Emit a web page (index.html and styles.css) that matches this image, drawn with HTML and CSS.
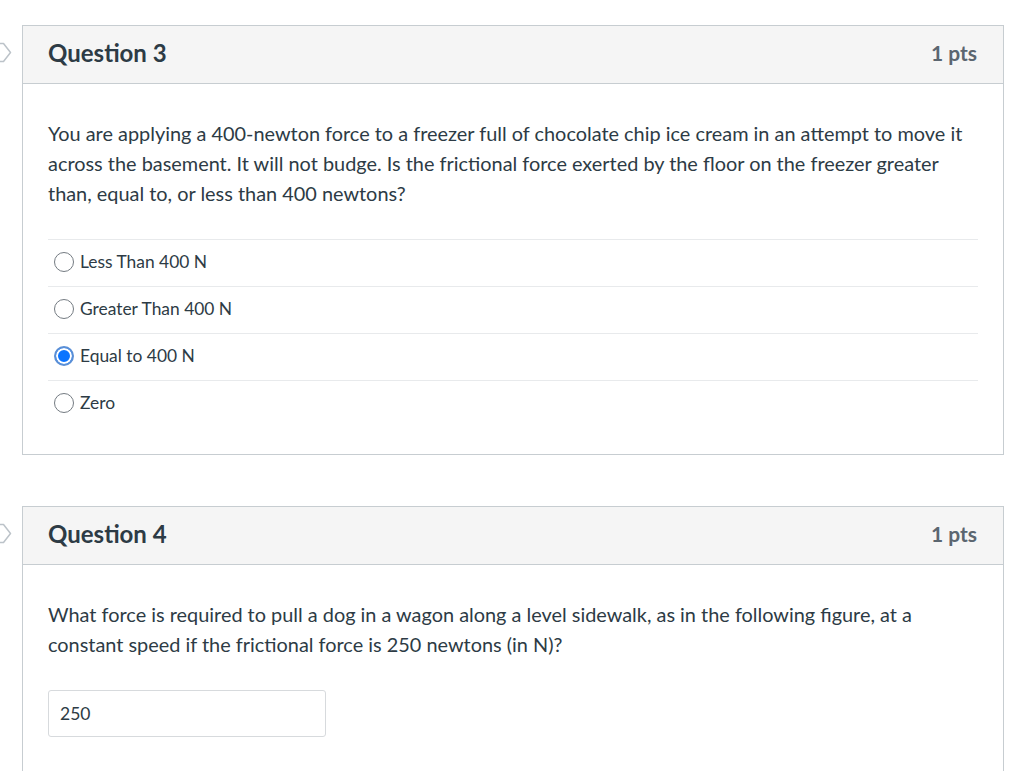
FILE: index.html
```html
<!DOCTYPE html>
<html>
<head>
<meta charset="utf-8">
<link rel="stylesheet" href="styles.css">
</head>
<body>
<div class="page">
  <div class="question">
    <svg class="flag" width="24" height="22" viewBox="0 0 24 22"><path d="M-2 1.5 L15.5 1.5 L22.5 10.5 L15.5 19.5 L-2 19.5" fill="none" stroke="#bcc3c9" stroke-width="1.5" stroke-linejoin="round"/></svg>
    <div class="card">
      <div class="card-header">
        <h2 class="title">Question 3</h2>
        <span class="pts">1 pts</span>
      </div>
      <div class="card-body">
        <p class="text">You are applying a 400-newton force to a freezer full of chocolate chip ice cream in an attempt to move it across the basement. It will not budge. Is the frictional force exerted by the floor on the freezer greater than, equal to, or less than 400 newtons?</p>
        <div class="answers">
          <label class="answer"><span class="radio"></span>Less Than 400 N</label>
          <label class="answer"><span class="radio"></span>Greater Than 400 N</label>
          <label class="answer"><span class="radio checked"></span>Equal to 400 N</label>
          <label class="answer"><span class="radio"></span>Zero</label>
        </div>
      </div>
    </div>
  </div>
  <div class="question">
    <svg class="flag" width="24" height="22" viewBox="0 0 24 22"><path d="M-2 1.5 L15.5 1.5 L22.5 10.5 L15.5 19.5 L-2 19.5" fill="none" stroke="#bcc3c9" stroke-width="1.5" stroke-linejoin="round"/></svg>
    <div class="card">
      <div class="card-header">
        <h2 class="title">Question 4</h2>
        <span class="pts">1 pts</span>
      </div>
      <div class="card-body card-body-tall">
        <p class="text">What force is required to pull a dog in a wagon along a level sidewalk, as in the following figure, at a constant speed if the frictional force is 250 newtons (in N)?</p>
        <div class="input">250</div>
      </div>
    </div>
  </div>
</div>
</body>
</html>
```
FILE: styles.css
```css
html, body {
  margin: 0;
  padding: 0;
  background: #fff;
  font-family: Lato, "Noto Sans", sans-serif;
  color: #2d3b45;
}
.page {
  padding: 25px 20px 0 22px;
  display: flex;
  flex-direction: column;
  gap: 51px;
}
.question {
  position: relative;
}
.flag {
  position: absolute;
  left: -34px;
  top: 17px;
}
.card {
  width: 980px;
  border: 1px solid #c7cdd1;
}
.card-header {
  box-sizing: border-box;
  height: 58px;
  background: #f5f5f5;
  border-bottom: 1px solid #c7cdd1;
  display: flex;
  align-items: center;
  justify-content: space-between;
  padding: 0 26px 4px 25px;
}
.title {
  margin: 0;
  font-size: 24px;
  font-weight: 700;
  color: #2d3b45;
}
.pts {
  font-size: 21px;
  font-weight: 700;
  color: #5b6670;
}
.card-body {
  padding: 34px 25px 27px 25px;
}
.card-body-tall {
  padding-bottom: 60px;
}
.text {
  margin: 0 10px 0 0;
  font-size: 19.9px;
  line-height: 30px;
  color: #2d3b45;
}
.answers {
  margin-top: 31px;
}
.answer {
  box-sizing: border-box;
  display: flex;
  align-items: center;
  height: 47px;
  padding-bottom: 3px;
  border-top: 1px solid #e8eaec;
  font-size: 17.4px;
  color: #2d3b45;
}
.radio {
  box-sizing: border-box;
  width: 20px;
  height: 20px;
  border-radius: 50%;
  border: 1px solid #747b82;
  margin: 1px 6px 0 6px;
  background: #fff;
}
.radio.checked {
  border: 2px solid #5a8fd6;
  background: #0b74ff;
  box-shadow: inset 0 0 0 2px #fff;
}
.input {
  box-sizing: border-box;
  margin-top: 31px;
  width: 278px;
  height: 47px;
  border: 1px solid #d7dadd;
  border-radius: 3px;
  padding: 0 11px;
  display: flex;
  align-items: center;
  font-size: 17.5px;
  color: #2d3b45;
}
```
